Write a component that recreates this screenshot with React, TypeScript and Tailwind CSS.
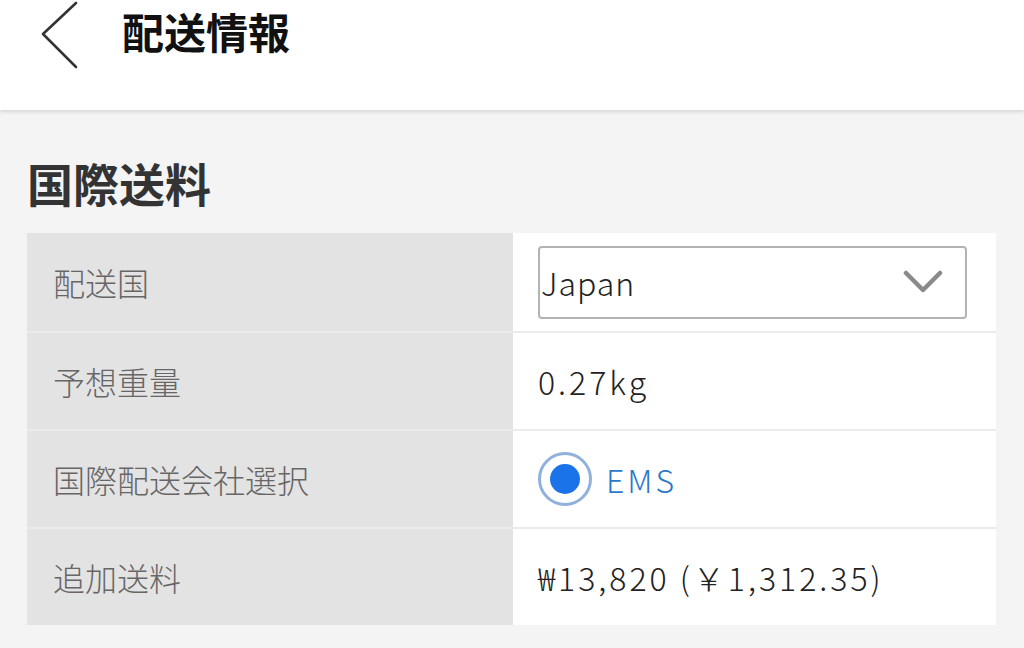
const rows = [
  { label: "配送国", kind: "select" },
  { label: "予想重量", kind: "text", value: "0.27kg" },
  { label: "国際配送会社選択", kind: "radio", value: "EMS" },
  { label: "追加送料", kind: "text", value: "₩13,820 (￥1,312.35)" },
];

export default function App() {
  return (
    <div
      className="w-[1024px] h-[648px] overflow-hidden bg-[#f4f4f4]"
      style={{ fontFamily: '"Noto Sans CJK JP", "Noto Sans", sans-serif' }}
    >
      {/* Header */}
      <header className="h-[110px] bg-white shadow-[0_2px_4px_rgba(0,0,0,0.12)] flex items-start relative z-10">
        <svg className="ml-[40px] mt-[1px]" width="40" height="68" viewBox="0 0 40 68" fill="none">
          <path d="M36 2 L3 33 L36 66" stroke="#333" strokeWidth="2.6" strokeLinecap="round" strokeLinejoin="round" />
        </svg>
        <h1 className="ml-[42px] mt-[2px] text-[42px] font-bold leading-[58px] text-[#111]">
          配送情報
        </h1>
      </header>

      {/* Section */}
      <section className="pl-[27px] pr-[28px]">
        <h2 className="pt-[43px] pb-[22px] text-[46px] font-bold leading-[58px] text-[#333]">
          国際送料
        </h2>
        <div className="flex flex-col">
          {rows.map((row, i) => (
            <div
              key={row.label}
              className={
                "flex h-[98px] " +
                (i > 0 ? "border-t-2 border-[#ebebeb]" : "")
              }
            >
              <div className="w-[486px] bg-[#e3e3e3] flex items-center pl-[26px] text-[32px] font-light text-[#666]">
                {row.label}
              </div>
              <div className="flex-1 bg-white flex items-center pl-[25px] pr-[29px]">
                {row.kind === "select" && (
                  <div className="w-full h-[73px] border-2 border-[#b3b3b3] rounded-[4px] flex items-center justify-between pl-[1px] pr-[22px]">
                    <span className="text-[32px] font-light tracking-[1px] text-[#222]">Japan</span>
                    <svg width="40" height="26" viewBox="0 0 40 26" fill="none">
                      <path d="M3 4 L20 21 L37 4" stroke="#8a8a8a" strokeWidth="4.5" strokeLinecap="round" strokeLinejoin="round" />
                    </svg>
                  </div>
                )}
                {row.kind === "text" && (
                  <span className="text-[32px] font-light tracking-[3px] text-[#222]">{row.value}</span>
                )}
                {row.kind === "radio" && (
                  <div className="flex items-center gap-[14px]">
                    <span className="w-[54px] h-[54px] rounded-full border-[3px] border-[#8fb1dc] flex items-center justify-center">
                      <span className="w-[30px] h-[30px] rounded-full bg-[#1a73e8]" />
                    </span>
                    <span className="text-[32px] font-light tracking-[3px] text-[#2b78c9]">{row.value}</span>
                  </div>
                )}
              </div>
            </div>
          ))}
        </div>
      </section>
    </div>
  );
}
